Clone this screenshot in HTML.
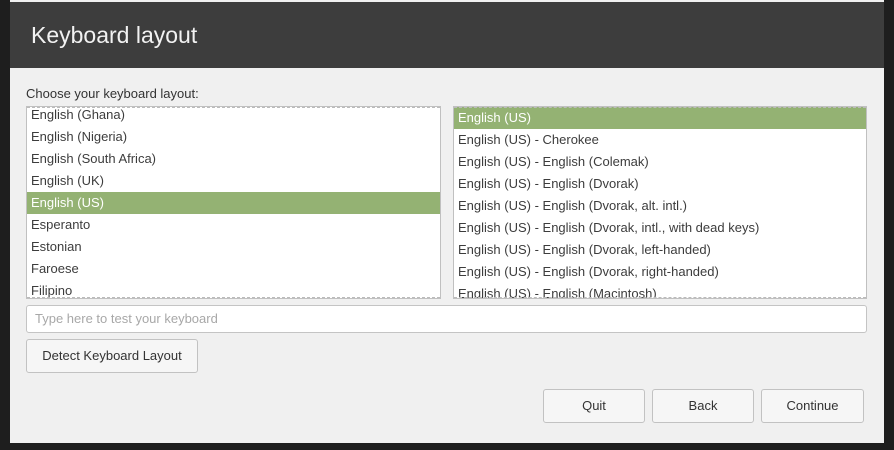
<!DOCTYPE html>
<html><head><style>
body{margin:0;width:894px;height:450px;background:#1e1e1e;position:relative;overflow:hidden;font-family:"Liberation Sans","DejaVu Sans",sans-serif;font-size:13px;color:#3c3c3c}
.win{position:absolute;left:10px;top:0;width:874px;height:443px;background:#f0f0f0}
.hdr{position:absolute;left:0;top:2px;width:874px;height:66px;background:#3d3d3d;color:#f2f2f2;font-size:23px;line-height:66px;text-indent:21px}
.lbl{position:absolute;left:16px;top:86px;font-size:13px;color:#333}
.list{position:absolute;background:#fff;border:1px solid #c0c0c0;overflow:hidden}
.list:after{content:"";position:absolute;left:0;right:0;bottom:0;border-bottom:1px dashed #bbb}
.list:before{content:"";position:absolute;left:0;right:0;top:0;border-top:1px dashed #bbb;z-index:2}
.row{height:22px;line-height:22px;padding-left:4px;white-space:nowrap;color:#3c3c3c}
.sel{background:#94b273;color:#fff}
.entry{position:absolute;left:16px;top:305px;width:839px;height:26px;background:#fff;border:1px solid #c4c4c4;border-radius:3px;color:#a8a8a8;line-height:26px;text-indent:8px}
.btn{position:absolute;height:32px;border:1px solid #c2c2c2;border-radius:3px;background:#f6f6f6;text-align:center;line-height:32px;color:#333}
</style></head><body>
<div class="win">
<div class="hdr">Keyboard layout</div>
<div class="lbl">Choose your keyboard layout:</div>
<div class="list" style="left:16px;top:106px;width:413px;height:191px">
<div style="margin-top:-3px">
<div class="row">English (Ghana)</div>
<div class="row">English (Nigeria)</div>
<div class="row">English (South Africa)</div>
<div class="row">English (UK)</div>
<div class="row sel">English (US)</div>
<div class="row">Esperanto</div>
<div class="row">Estonian</div>
<div class="row">Faroese</div>
<div class="row">Filipino</div>
</div></div>
<div class="list" style="left:443px;top:106px;width:412px;height:191px">
<div class="row sel">English (US)</div>
<div class="row">English (US) - Cherokee</div>
<div class="row">English (US) - English (Colemak)</div>
<div class="row">English (US) - English (Dvorak)</div>
<div class="row">English (US) - English (Dvorak, alt. intl.)</div>
<div class="row">English (US) - English (Dvorak, intl., with dead keys)</div>
<div class="row">English (US) - English (Dvorak, left-handed)</div>
<div class="row">English (US) - English (Dvorak, right-handed)</div>
<div class="row">English (US) - English (Macintosh)</div>
</div>
<div class="entry">Type here to test your keyboard</div>
<div class="btn" style="left:16px;top:339px;width:170px">Detect Keyboard Layout</div>
<div class="btn" style="left:533px;top:389px;width:100px">Quit</div>
<div class="btn" style="left:642px;top:389px;width:100px">Back</div>
<div class="btn" style="left:751px;top:389px;width:101px">Continue</div>
</div>
</body></html>
